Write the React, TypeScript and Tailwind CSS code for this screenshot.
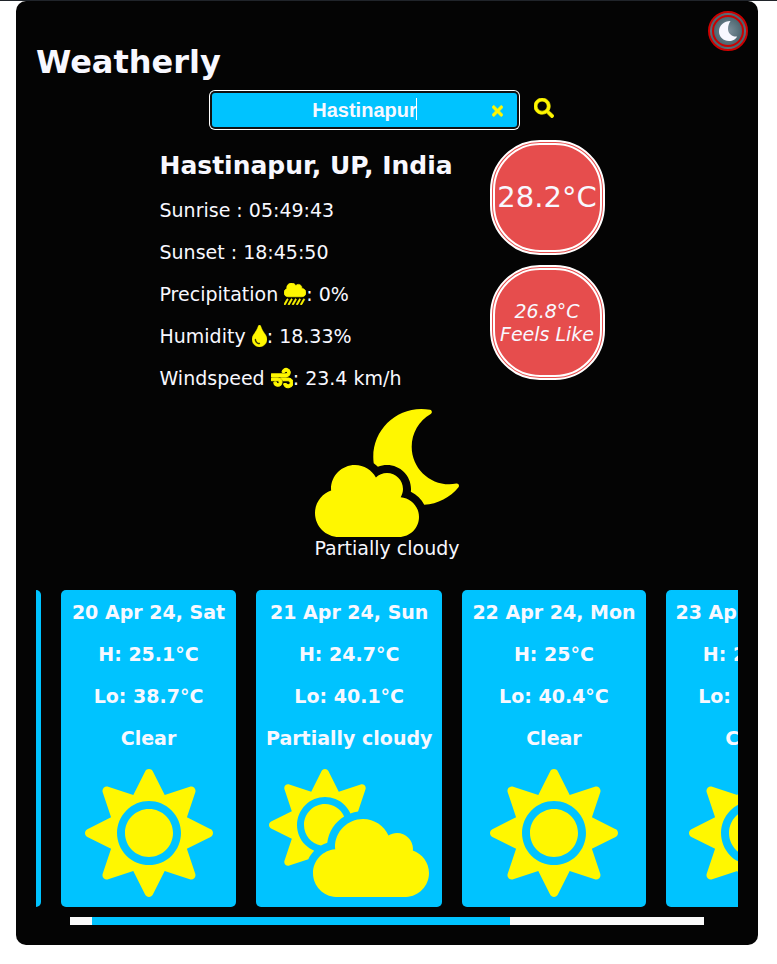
import { useState } from "react";
import {
  FaCloudMoon,
  FaCloudShowersHeavy,
  FaCloudSun,
  FaSearch,
  FaSun,
  FaTimes,
  FaTint,
  FaWind,
} from "react-icons/fa";

type Day = { date: string; high: string; low: string; sky: string };

const days: Day[] = [
  { date: "20 Apr 24, Sat", high: "25.1°C", low: "38.7°C", sky: "Clear" },
  { date: "21 Apr 24, Sun", high: "24.7°C", low: "40.1°C", sky: "Partially cloudy" },
  { date: "22 Apr 24, Mon", high: "25°C", low: "40.4°C", sky: "Clear" },
  { date: "23 Apr 24, Tue", high: "25.3°C", low: "40.2°C", sky: "Clear" },
];

function DayCard({ day }: { day: Day }) {
  return (
    <li className="flex min-w-[175px] shrink-0 flex-col items-center gap-[19px] rounded-[5px] bg-[#00c3ff] px-[10px] pt-[11px] pb-[10px] font-bold whitespace-nowrap">
      <p>{day.date}</p>
      <p>H: {day.high}</p>
      <p>Lo: {day.low}</p>
      <p>{day.sky}</p>
      {day.sky === "Clear" ? (
        <FaSun className="size-32 text-[#fff700]" />
      ) : (
        <FaCloudSun className="h-32 w-40 text-[#fff700]" />
      )}
    </li>
  );
}

function SearchBar() {
  const [city, setCity] = useState("Hastinapur");
  return (
    <form
      className="mt-[11px] flex items-center justify-center gap-[17px] pr-2"
      onSubmit={(e) => e.preventDefault()}
    >
      <div className="relative">
        <input
          aria-label="City"
          value={city}
          onChange={(e) => setCity(e.target.value)}
          className="block h-[34px] w-[305px] rounded-[3px] bg-[#00c3ff] text-center font-['Liberation_Sans',Arial,sans-serif] text-[20px] font-bold text-[#f8f8ff] shadow-[0_0_0_2px_#101010,0_0_0_3px_#ffffff] outline-none"
        />
        <span className="absolute top-[5px] left-[204px] h-[22px] w-px bg-white" />
        <button
          type="button"
          aria-label="Clear"
          onClick={() => setCity("")}
          className="absolute top-[10px] right-[14px] text-[#fff700]"
        >
          <FaTimes className="h-4 w-[11px]" strokeWidth={16} />
        </button>
      </div>
      <button type="submit" aria-label="Search" className="mb-1 text-[#fff700]">
        <FaSearch className="size-5" strokeWidth={16} />
      </button>
    </form>
  );
}

export default function App() {
  return (
    <div className="border-t border-[#20242a] bg-white pr-[19px] pl-4 font-[Verdana,'DejaVu_Sans',sans-serif] text-[19px] leading-[23px] text-[#f8f8ff]">
      <main className="relative rounded-[10px] bg-[#040404] p-5">
        <button
          aria-label="Toggle night theme"
          className="absolute top-[10px] right-[10px] flex size-10 items-center justify-center rounded-full border-[6px] border-double border-[#cc0000] bg-[radial-gradient(circle,#7f929d_0%,#4d6670_70%)]"
        >
          <svg viewBox="0 0 18 20" className="h-5 w-[18px]" fill="#f8f8ff">
            <path d="M11.5 0C5 0 0 4.500 0 10.500C0 16 4.500 20 10 20C14 20 17 18 18 15.500C13 16 9 12.500 9 8C9 5 10 2 11.500 0Z" />
          </svg>
        </button>

        <h1 className="mt-[22px] text-[32px] leading-[39px] font-bold">Weatherly</h1>
        <SearchBar />

        <section className="mt-[13px] flex justify-center gap-10 pr-[10px]">
          <div className="flex w-[290px] flex-col gap-[19px] pt-[11px] whitespace-nowrap">
            <h2 className="text-[25px] leading-[29px] font-bold">Hastinapur, UP, India</h2>
            <p>Sunrise : 05:49:43</p>
            <p>Sunset : 18:45:50</p>
            <p>
              Precipitation{" "}
              <FaCloudShowersHeavy
                strokeWidth={16}
                className="inline size-[22px] align-[-4px] text-[#fff700]"
              />
              : 0%
            </p>
            <p>
              Humidity{" "}
              <FaTint className="inline h-[22px] w-[15px] align-[-4px] text-[#fff700]" strokeWidth={8} />: 18.33%
            </p>
            <p>
              Windspeed{" "}
              <FaWind className="inline size-[22px] align-[-4px] text-[#fff700]" strokeWidth={24} />: 23.4 km/h
            </p>
          </div>
          <div className="flex flex-col gap-[10px]">
            <div className="flex size-[115px] items-center justify-center rounded-[50px] border-[5px] border-double border-white bg-[#e64d4d] text-[29px] whitespace-nowrap">
              28.2°C
            </div>
            <div className="flex size-[115px] flex-col items-center justify-center rounded-[50px] border-[5px] border-double border-white bg-[#e64d4d] whitespace-nowrap italic">
              <span>26.8°C</span>
              <span>Feels Like</span>
            </div>
          </div>
        </section>

        <section className="mt-[19px] flex flex-col items-center">
          <FaCloudMoon className="h-32 w-36 text-[#fff700]" />
          <p>Partially cloudy</p>
        </section>

        <ul className="mt-[30px] flex gap-5 overflow-hidden">
          <li className="w-[5px] shrink-0 rounded-r-[5px] bg-[#00c3ff]" />
          {days.map((day) => (
            <DayCard key={day.date} day={day} />
          ))}
        </ul>
        <div className="mx-[34px] mt-[10px] flex h-2 bg-[#fafafa]">
          <div className="ml-[22px] w-[66%] bg-[#00c3ff]" />
        </div>
      </main>
    </div>
  );
}
